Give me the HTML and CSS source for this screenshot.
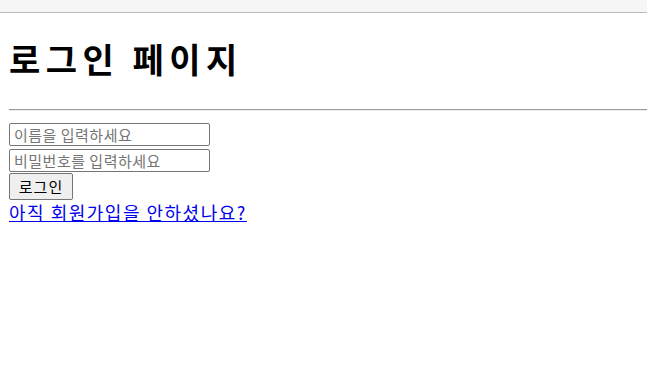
FILE: index.html
```html
<!DOCTYPE html>
<html>
<head>
    <title>로그인 페이지</title>
    <link rel="stylesheet" href="styles.css">
</head>
<body>
    <div class="topbar"></div>
    <div class="page">
        <h1 class="title">로그인 페이지</h1>
        <hr class="divider">
        <form class="login-form">
            <input type="text" class="field" placeholder="이름을 입력하세요">
            <input type="password" class="field" placeholder="비밀번호를 입력하세요">
            <button type="submit" class="login-btn">로그인</button>
        </form>
        <a href="#" class="signup-link">아직 회원가입을 안하셨나요?</a>
    </div>
</body>
</html>
```

FILE: styles.css
```css
body {
    margin: 0;
    padding: 0;
    background-color: #ffffff;
    font-family: "Noto Sans CJK KR", "Noto Sans", sans-serif;
}

.topbar {
    height: 12px;
    background-color: #f6f6f6;
    border-bottom: 1px solid #bcbcbc;
}

.page {
    padding-left: 9px;
}

.title {
    margin: 0;
    padding-top: 23px;
    font-size: 34px;
    line-height: 46px;
    letter-spacing: 5.5px;
    font-weight: bold;
    color: #000;
}

.divider {
    margin: 27px 0 0 0;
    border: 0;
    border-top: 1px solid #9a9a9a;
    border-bottom: 1px solid #eeeeee;
}

.login-form {
    display: flex;
    flex-direction: column;
    align-items: flex-start;
    margin-top: 12px;
    gap: 3px;
}

.field {
    box-sizing: border-box;
    width: 201px;
    height: 23px;
    margin: 0;
    padding: 0 4px;
    border: 1px solid #767676;
    border-radius: 2px;
    font-family: inherit;
    font-size: 15px;
    line-height: 21px;
    letter-spacing: 0.5px;
}

.field::placeholder {
    color: #757575;
}

.login-btn {
    box-sizing: border-box;
    width: 64px;
    height: 27px;
    margin: -2px 0 0 0;
    padding: 0;
    background-color: #efefef;
    border: 1px solid #767676;
    border-radius: 2px;
    font-family: inherit;
    font-size: 15px;
    line-height: 24px;
    letter-spacing: 1px;
    color: #000;
}

.signup-link {
    display: inline-block;
    margin-top: 1px;
    font-size: 18px;
    line-height: 23px;
    letter-spacing: 1.5px;
    color: #0000ee;
}
```
